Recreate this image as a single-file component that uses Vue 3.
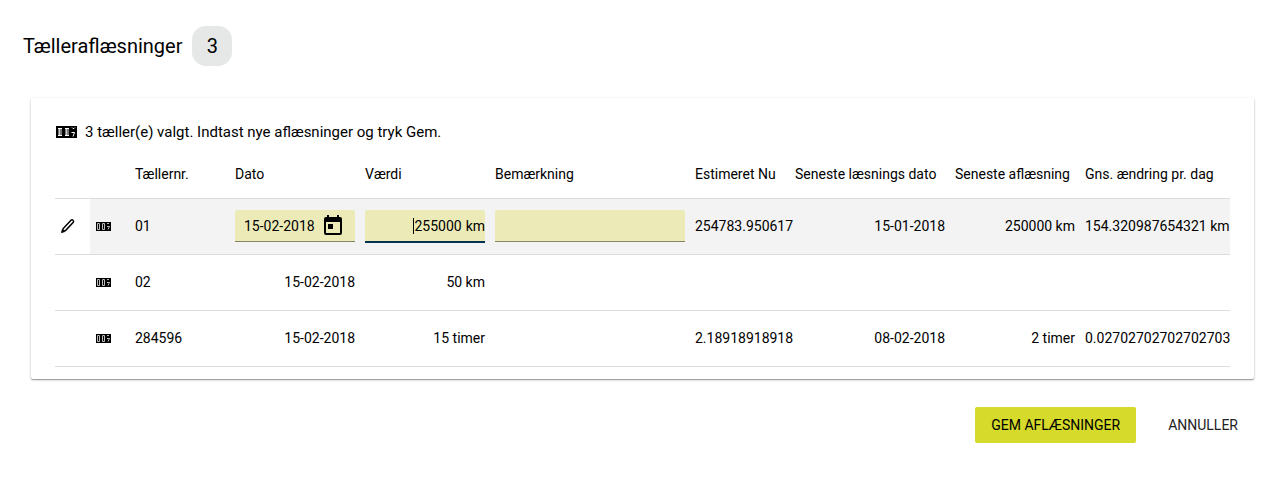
<script setup>
import { ref, h } from 'vue';

const columns = [
  { key: 'edit', label: '' },
  { key: 'icon', label: '' },
  { key: 'number', label: 'Tællernr.' },
  { key: 'date', label: 'Dato' },
  { key: 'value', label: 'Værdi' },
  { key: 'remark', label: 'Bemærkning' },
  { key: 'estimate', label: 'Estimeret Nu' },
  { key: 'last-date', label: 'Seneste læsnings dato' },
  { key: 'last-value', label: 'Seneste aflæsning' },
  { key: 'change', label: 'Gns. ændring pr. dag' },
];

const meters = ref([
  {
    number: '01',
    date: '15-02-2018',
    value: '255000',
    unit: 'km',
    remark: '',
    estimate: '254783.950617',
    lastDate: '15-01-2018',
    lastValue: '250000 km',
    change: '154.320987654321 km',
  },
  {
    number: '02',
    date: '15-02-2018',
    value: '50',
    unit: 'km',
    remark: '',
    estimate: '',
    lastDate: '',
    lastValue: '',
    change: '',
  },
  {
    number: '284596',
    date: '15-02-2018',
    value: '15',
    unit: 'timer',
    remark: '',
    estimate: '2.18918918918',
    lastDate: '08-02-2018',
    lastValue: '2 timer',
    change: '0.02702702702702703 timer',
  },
]);

const editing = ref(0);

// Three counter wheels, the last one halfway between two digits
function CounterIcon() {
  return h('svg', { viewBox: '0 0 21 12', 'aria-hidden': 'true' }, [
    h('path', { fill: '#000', d: 'M0 0h21v12H0z' }),
    h('path', { fill: '#777', d: 'M2 2h4v8H2zM9 2h4v8H9z' }),
    h('path', {
      fill: 'none',
      stroke: '#fff',
      d: 'M2 2.500h4M2 9.500h4M9 2.500h4M9 9.500h4M16 1.500l1 1h1l1-1M15.500 6.500h3l-1.500 4',
    }),
    h('path', { fill: 'none', stroke: '#ccc', d: 'M3.500 3v6M10.500 3v6' }),
  ]);
}

// Small version with plain zeros on the first two wheels
function CounterIconSmall() {
  return h('svg', { viewBox: '0 0 15 9', 'aria-hidden': 'true' }, [
    h('path', { fill: '#000', d: 'M0 0h15v9H0z' }),
    h('path', { fill: 'none', stroke: '#bbb', d: 'M1.500 1.500h2v6h-2zM6.500 1.500h2v6h-2z' }),
    h('path', { fill: 'none', stroke: '#bbb', d: 'M11 1.500h2M11 4.500h2.500l-1.500 3' }),
  ]);
}
</script>

<template>
  <main class="page">
    <h1 class="title">Tælleraflæsninger <span class="count">{{ meters.length }}</span></h1>

    <section class="card">
      <p class="hint">
        <CounterIcon class="hint-icon" />
        {{ meters.length }} tæller(e) valgt. Indtast nye aflæsninger og tryk Gem.
      </p>

      <div class="table-wrap">
        <table>
          <colgroup>
            <col v-for="column in columns" :key="column.key" :class="`col-${column.key}`" />
          </colgroup>
          <thead>
            <tr>
              <th v-for="column in columns" :key="column.key" scope="col">{{ column.label }}</th>
            </tr>
          </thead>
          <tbody>
            <tr v-for="(meter, index) in meters" :key="meter.number" :class="{ active: index === editing }">
              <td class="edit">
                <svg v-if="index === editing" class="pencil" viewBox="0 0 16 16" aria-hidden="true">
                  <path class="pencil-body" d="M2.500 13.500l.7-3L11 2.200q1-.8 2 .1t.3 1.900L5.500 12.500z" />
                  <path class="pencil-tip" d="M1 15l1-4 3 3z" />
                </svg>
              </td>
              <td><CounterIconSmall class="row-icon" /></td>
              <td>{{ meter.number }}</td>
              <template v-if="index === editing">
                <td>
                  <div class="field date-field">
                    <input v-model="meter.date" type="text" aria-label="Dato" />
                    <button type="button" class="calendar" aria-label="Vælg dato">
                      <svg viewBox="0 0 24 24" aria-hidden="true">
                        <path d="M19 3h-1V1h-2v2H8V1H6v2H5a2 2 0 0 0-2 2v14a2 2 0 0 0 2 2h14a2 2 0 0 0 2-2V5a2 2 0 0 0-2-2zm0 16H5V8h14v11zM7 10h5v5H7z" />
                      </svg>
                    </button>
                  </div>
                </td>
                <td>
                  <label class="field value-field">
                    <span class="caret"></span>
                    <input v-model="meter.value" type="text" aria-label="Værdi" />
                    <span class="unit">{{ meter.unit }}</span>
                  </label>
                </td>
                <td>
                  <div class="field">
                    <input v-model="meter.remark" type="text" aria-label="Bemærkning" />
                  </div>
                </td>
              </template>
              <template v-else>
                <td class="right">{{ meter.date }}</td>
                <td class="right">{{ meter.value }} {{ meter.unit }}</td>
                <td>{{ meter.remark }}</td>
              </template>
              <td>{{ meter.estimate }}</td>
              <td class="right">{{ meter.lastDate }}</td>
              <td class="right">{{ meter.lastValue }}</td>
              <td>{{ meter.change }}</td>
            </tr>
          </tbody>
        </table>
      </div>
    </section>

    <footer class="actions">
      <button type="button" class="button primary">Gem aflæsninger</button>
      <button type="button" class="button">Annuller</button>
    </footer>
  </main>
</template>

<style>
body {
  background: #fff;
}
</style>

<style scoped>
.page {
  padding: 26px 30px 40px 31px;
  color: #000;
  font-family: Roboto, sans-serif;
  font-size: 14px;
  line-height: 20px;
}

.title {
  display: flex;
  align-items: center;
  gap: 10px;
  margin: 0 0 32px -8px;
  font-size: 20px;
  font-weight: 400;
}

.count {
  min-width: 40px;
  border-radius: 14px;
  background: #e5e8e7;
  line-height: 40px;
  text-align: center;
}

.card {
  padding: 24px 24px 12px;
  border-radius: 2px;
  box-shadow: 0 1px 3px rgba(0, 0, 0, 0.2), 0 1px 1px rgba(0, 0, 0, 0.3);
}

.hint {
  display: flex;
  align-items: center;
  gap: 8px;
  margin: 0 0 8px;
  font-size: 15px;
}

.hint-icon {
  width: 21px;
  height: 12px;
  margin-left: 1px;
}

.table-wrap {
  overflow: hidden;
}

table {
  width: 100%;
  table-layout: fixed;
  border-spacing: 0;
}

.col-edit {
  width: 35px;
}

.col-icon {
  width: 40px;
}

.col-number,
.col-estimate {
  width: 100px;
}

.col-date,
.col-value,
.col-last-value {
  width: 130px;
}

.col-remark {
  width: 200px;
}

.col-last-date {
  width: 160px;
}

th,
td {
  box-sizing: border-box;
  padding: 0 5px;
  border-bottom: 1px solid #dcdcdc;
  text-align: left;
  white-space: nowrap;
}

th {
  height: 49px;
  font-weight: 400;
}

td {
  height: 56px;
  padding-bottom: 1px;
}

.right {
  text-align: right;
}

.active td:not(.edit) {
  background: #f3f3f3;
}

.pencil {
  display: block;
  width: 16px;
  height: 16px;
}

.pencil-body {
  fill: none;
  stroke: #000;
  stroke-width: 1.5;
}

.pencil-tip {
  fill: #000;
}

.row-icon {
  display: block;
  width: 15px;
  height: 9px;
  margin-left: 1px;
}

.field {
  display: flex;
  align-items: center;
  box-sizing: border-box;
  height: 32px;
  border-bottom: 1px solid #85856a;
  border-radius: 2px 2px 0 0;
  background: #ecebb8;
}

.field input {
  flex: 1;
  min-width: 0;
  padding: 0;
  border: 0;
  outline: 0;
  background: none;
  color: inherit;
  font: inherit;
}

.date-field {
  padding: 0 10px 0 9px;
}

.calendar {
  padding: 0;
  border: 0;
  background: none;
}

.calendar svg {
  display: block;
  width: 24px;
  height: 24px;
}

.value-field {
  justify-content: flex-end;
  height: 33px;
  margin-bottom: -1px;
  border-bottom: 2px solid #003350;
}

.value-field input {
  flex: none;
  field-sizing: content;
}

.caret {
  width: 1px;
  height: 16px;
  background: #000;
}

.unit {
  margin-left: 4px;
}

.actions {
  display: flex;
  justify-content: flex-end;
  gap: 16px;
  margin-top: 28px;
}

.button {
  height: 36px;
  padding: 0 16px;
  border: 0;
  border-radius: 2px;
  background: none;
  color: #222;
  font: inherit;
  text-transform: uppercase;
}

.primary {
  background: #d5da2b;
  color: #000;
}
</style>
